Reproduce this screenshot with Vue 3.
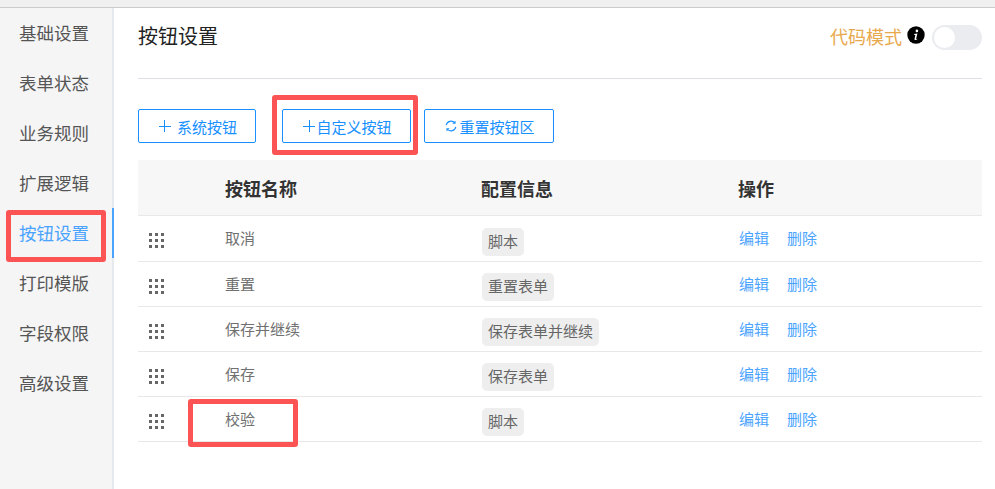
<script setup>
const navItems = ['基础设置', '表单状态', '业务规则', '扩展逻辑', '按钮设置', '打印模版', '字段权限', '高级设置']
const rows = [
  { name: '取消', config: '脚本', h: 46 },
  { name: '重置', config: '重置表单', h: 45 },
  { name: '保存并继续', config: '保存表单并继续', h: 45 },
  { name: '保存', config: '保存表单', h: 45 },
  { name: '校验', config: '脚本', h: 45 },
]
const dots = [0, 1, 2].flatMap((y) => [0, 1, 2].map((x) => ({ x: x * 6, y: y * 6 })))
</script>

<template>
  <div class="page">
    <div class="topbar"></div>
    <div class="body">
      <aside class="side">
        <div
          v-for="item in navItems"
          :key="item"
          class="nav-item"
          :class="{ active: item === '按钮设置' }"
        >{{ item }}</div>
      </aside>
      <main class="main">
        <header class="head">
          <h1 class="title">按钮设置</h1>
          <div class="code-mode">
            <span class="code-label">代码模式</span>
            <svg class="info" width="18" height="18" viewBox="0 0 18 18">
              <circle cx="9" cy="9" r="8.7" fill="#000" />
              <path d="M9.9 3.6a1.3 1.3 0 1 1-.01 2.6 1.3 1.3 0 0 1 .01-2.6ZM7 7.9l3.4-.5-1.2 5.2c-.1.4.2.5.9.1l.2.5c-1.1.9-3 1.300-2.800-.2l.9-4-.9-.1Z" fill="#fff" />
            </svg>
            <span class="switch"><span class="knob"></span></span>
          </div>
        </header>
        <div class="toolbar">
          <button class="btn btn-sys"><span class="plus"></span>系统按钮</button>
          <button class="btn btn-custom"><span class="plus"></span>自定义按钮</button>
          <button class="btn btn-reset">
            <svg class="refresh" width="12" height="12" viewBox="0 0 12 12" fill="none" stroke="#1890ff" stroke-width="1.100">
              <path d="M1.200 5.200A4.900 4.900 0 0 1 9.800 3" />
              <path d="M10.800 6.800A4.900 4.900 0 0 1 2.200 9" />
              <path d="M10 .9V3.200H7.700M2 11.100V8.800h2.300" />
            </svg>重置按钮区
          </button>
        </div>
        <div class="table">
          <div class="row row-head">
            <div></div>
            <div>按钮名称</div>
            <div>配置信息</div>
            <div>操作</div>
          </div>
          <div v-for="row in rows" :key="row.name" class="row" :style="{ height: row.h + 'px' }">
            <div class="handle">
              <svg width="15" height="15" viewBox="0 0 15 15">
                <rect v-for="(d, i) in dots" :key="i" :x="d.x" :y="d.y" width="3" height="3" fill="#666" />
              </svg>
            </div>
            <div class="name">{{ row.name }}</div>
            <div class="config"><span class="tag">{{ row.config }}</span></div>
            <div class="ops"><a>编辑</a><a>删除</a></div>
          </div>
        </div>
      </main>
    </div>
    <i class="mark mark-nav"></i>
    <i class="mark mark-custom"></i>
    <i class="mark mark-check"></i>
  </div>
</template>

<style>
html, body { margin: 0; background: #fff; }
</style>

<style scoped>
.page {
  position: relative;
  width: 995px;
  height: 489px;
  overflow: hidden;
  display: flex;
  flex-direction: column;
  background: #fff;
  font-family: "Liberation Sans", "Noto Sans CJK SC", sans-serif;
}
.topbar {
  height: 7px;
  flex: none;
  background: #f0f0f0;
  border-bottom: 1px solid #ccc;
}
.body { flex: 1; display: flex; min-height: 0; }
.side {
  width: 112px;
  flex: none;
  background: #f5f5f5;
  border-right: 2px solid #e6e9f0;
}
.nav-item {
  height: 50px;
  line-height: 52px;
  padding-left: 19px;
  margin-right: -2px;
  border-right: 2px solid transparent;
  font-size: 17.5px;
  color: #555;
}
.nav-item.active { color: #4aa3ff; border-right-color: #4aa3ff; }
.main { flex: 1; padding: 0 13px 0 24px; min-width: 0; }
.head {
  display: flex;
  justify-content: space-between;
  align-items: center;
  padding-bottom: 13px;
  box-sizing: border-box;
  height: 71px;
  border-bottom: 1px solid #dcdfe6;
}
.title { margin: 0 0 2px; font-size: 20px; font-weight: 400; color: #222; }
.code-mode { display: flex; align-items: center; }
.code-label { font-size: 18px; color: #e8a94d; margin-bottom: 2px; }
.info { margin: 0 0 4px 5px; }
.switch {
  margin: 1px 0 0 7px;
  width: 50px;
  height: 25px;
  border-radius: 13px;
  background: #ebecf0;
  position: relative;
  display: block;
}
.knob {
  position: absolute;
  left: 2px;
  top: 2px;
  width: 21px;
  height: 21px;
  border-radius: 50%;
  background: #fff;
}
.toolbar { display: flex; margin-top: 30px; height: 34px; }
.btn {
  height: 34px;
  padding: 0 0 0 2px;
  box-sizing: border-box;
  border: 1px solid #1890ff;
  border-radius: 2px;
  background: #fff;
  color: #1890ff;
  font-family: inherit;
  font-size: 15px;
  display: flex;
  align-items: center;
  justify-content: center;
}
.btn-sys { width: 118px; margin-right: 26px; }
.btn-custom { width: 129px; margin-right: 13px; }
.btn-reset { width: 130px; }
.plus {
  width: 12px;
  height: 12px;
  margin-right: 6px;
  background:
    linear-gradient(#1890ff, #1890ff) center / 100% 1px no-repeat,
    linear-gradient(#1890ff, #1890ff) center / 1px 100% no-repeat;
}
.btn-custom .plus { margin-right: 1px; }
.refresh { margin-right: 2px; }
.table { margin-top: 17px; }
.row {
  display: grid;
  grid-template-columns: 87px 256px 257px 1fr;
  align-items: center;
  height: 45px;
  box-sizing: border-box;
  border-bottom: 1px solid #e8e8e8;
  color: #707070;
}
.row-head {
  height: 56px;
  background: #f7f7f7;
  font-size: 18px;
  font-weight: 700;
  color: #333;
}
.handle { padding-left: 11px; height: 15px; margin-top: 4px; }
.handle svg { display: block; }
.config { margin-top: 6px; }
.tag {
  display: inline-block;
  height: 28px;
  line-height: 28px;
  margin-left: 1px;
  padding: 0 6px;
  border-radius: 5px;
  background: #eee;
  color: #666;
  font-size: 15px;
  vertical-align: middle;
}
.name { font-size: 15px; margin-bottom: 2px; }
.ops { display: flex; gap: 18px; margin: 0 0 2px 1px; color: #4aa3ff; font-size: 15px; }
.mark {
  position: absolute;
  box-sizing: border-box;
  border: 5px solid #fc5454;
  border-radius: 3px;
  pointer-events: none;
}
.mark-nav { left: 6px; top: 210px; width: 100px; height: 52px; }
.mark-custom { left: 272px; top: 95px; width: 146px; height: 60px; }
.mark-check { left: 188px; top: 399px; width: 110px; height: 48px; }
</style>
